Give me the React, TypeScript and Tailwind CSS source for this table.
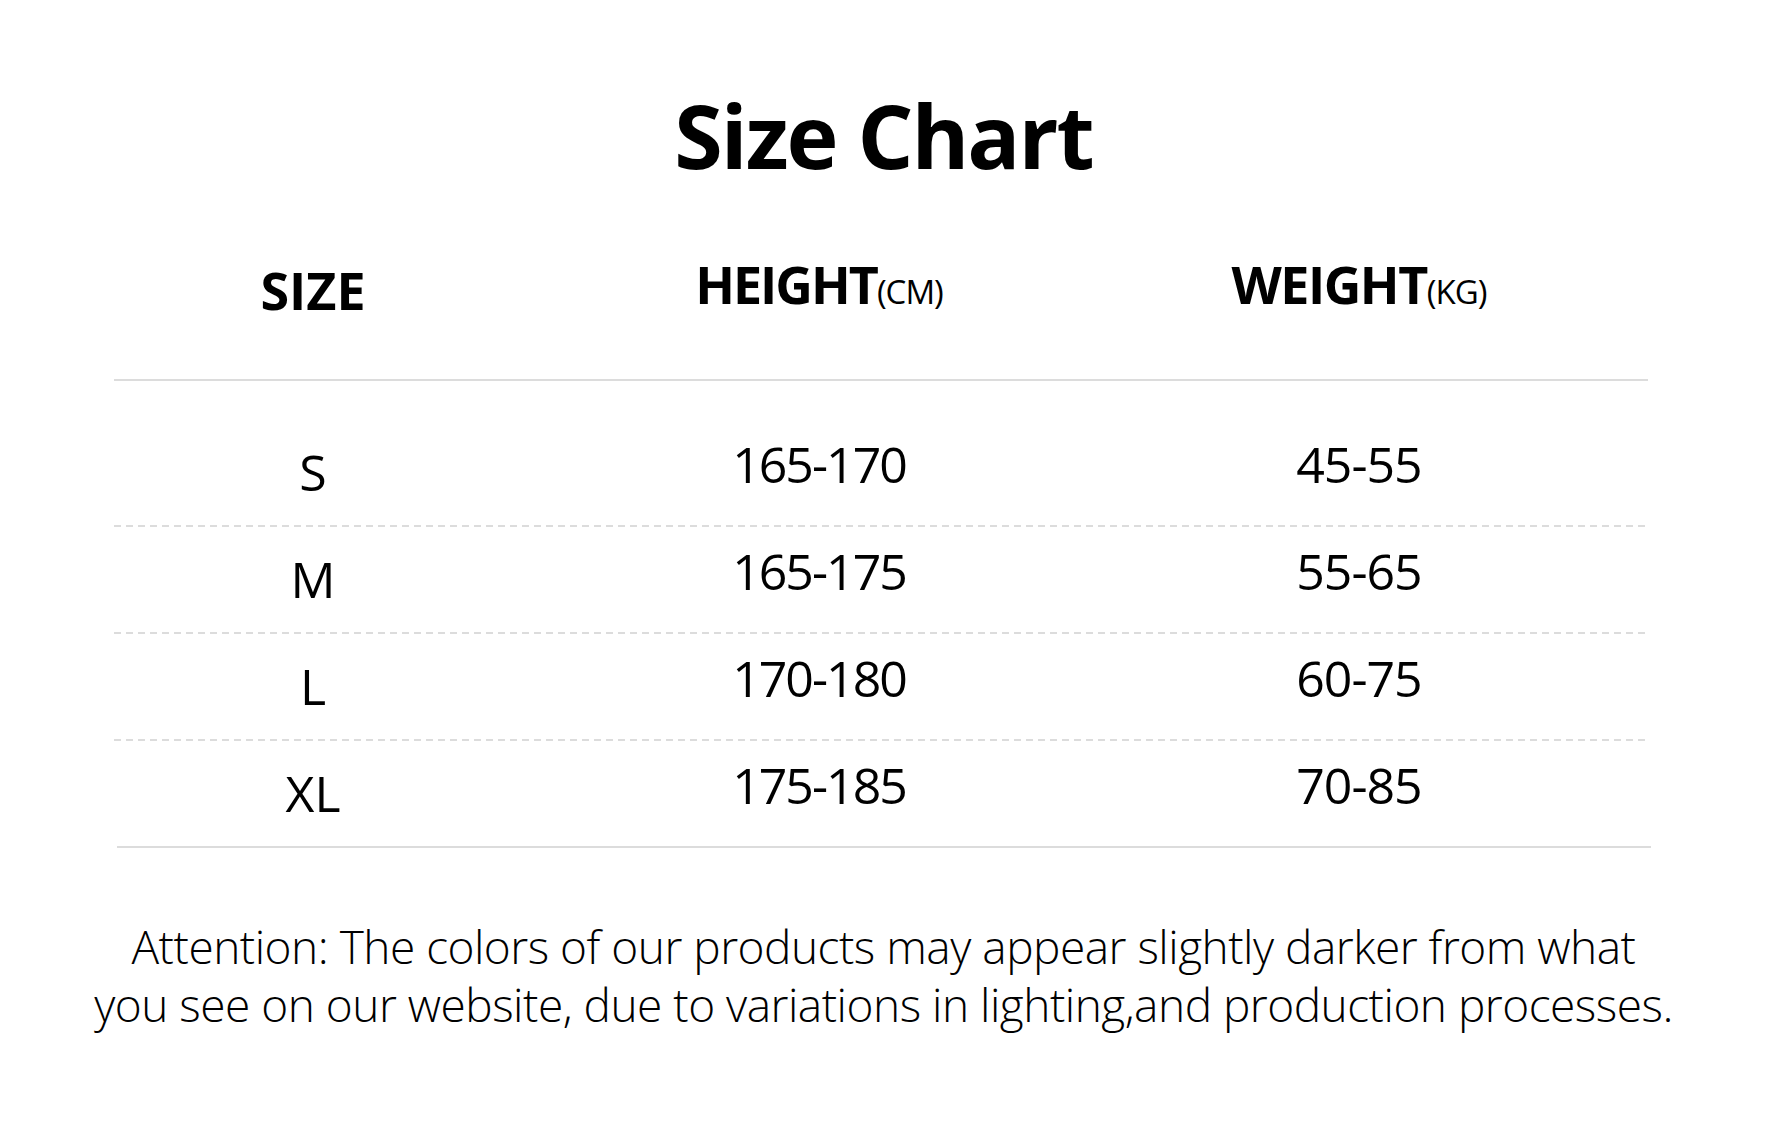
const ROWS = [
  { size: 'S', height: '165-170', weight: '45-55' },
  { size: 'M', height: '165-175', weight: '55-65' },
  { size: 'L', height: '170-180', weight: '60-75' },
  { size: 'XL', height: '175-185', weight: '70-85' },
];

const font = { fontFamily: '"Open Sans", "Noto Sans", sans-serif' };

const Dashed = () => (
  <div className="h-[2px] w-full bg-[repeating-linear-gradient(90deg,#dcdcdc_0px,#dcdcdc_7px,transparent_7px,transparent_12px)]" />
);

const SizeChart = () => {
  return (
    <div className="w-full h-[1123px] bg-white text-black overflow-hidden" style={font}>
      <h1 className="pt-[91px] text-center text-[88px] leading-[88px] font-bold tracking-[-2px]">Size Chart</h1>

      <div className="ml-[114px] w-[1534px]">
        {/* header */}
        <div className="grid grid-cols-[398px_614px_522px] h-[200px] pt-[79px]">
          <div className="text-center pt-[6px] text-[52px] leading-[52px] font-bold">SIZE</div>
          <div className="text-center text-[52px] leading-[52px] font-bold tracking-[-2px]">
            HEIGHT<span className="text-[33px] font-normal tracking-[-1px]">(CM)</span>
          </div>
          <div className="text-center text-[52px] leading-[52px] font-bold tracking-[-1.5px] pr-[56px]">
            WEIGHT<span className="text-[33px] font-normal tracking-[-1px]">(KG)</span>
          </div>
        </div>
        <div className="h-[2px] w-full bg-[#dcdcdc]" />

        {ROWS.map((r, i) => (
          <div key={r.size}>
            {i > 0 && <Dashed />}
            <div className={`grid grid-cols-[398px_614px_522px] text-[50px] leading-[50px] ${i === 0 ? 'h-[144px] pt-[58px]' : 'h-[105px] pt-[19px]'}`}>
              <div className="text-center pt-[8px]">{r.size}</div>
              <div className="text-center tracking-[-2px]">{r.height}</div>
              <div className="text-center tracking-[-1px] pr-[56px]">{r.weight}</div>
            </div>
          </div>
        ))}
        <div className="h-[2px] w-full bg-[#dcdcdc] ml-[3px]" />
      </div>

      <p className="mt-[69px] text-center text-[46px] leading-[58px] font-light tracking-[-0.5px]">
        Attention: The colors of our products may appear slightly darker from what
        <br />
        you see on our website, due to variations in lighting,and production processes.
      </p>
    </div>
  );
};

export default function App() {
  return <SizeChart />;
}
